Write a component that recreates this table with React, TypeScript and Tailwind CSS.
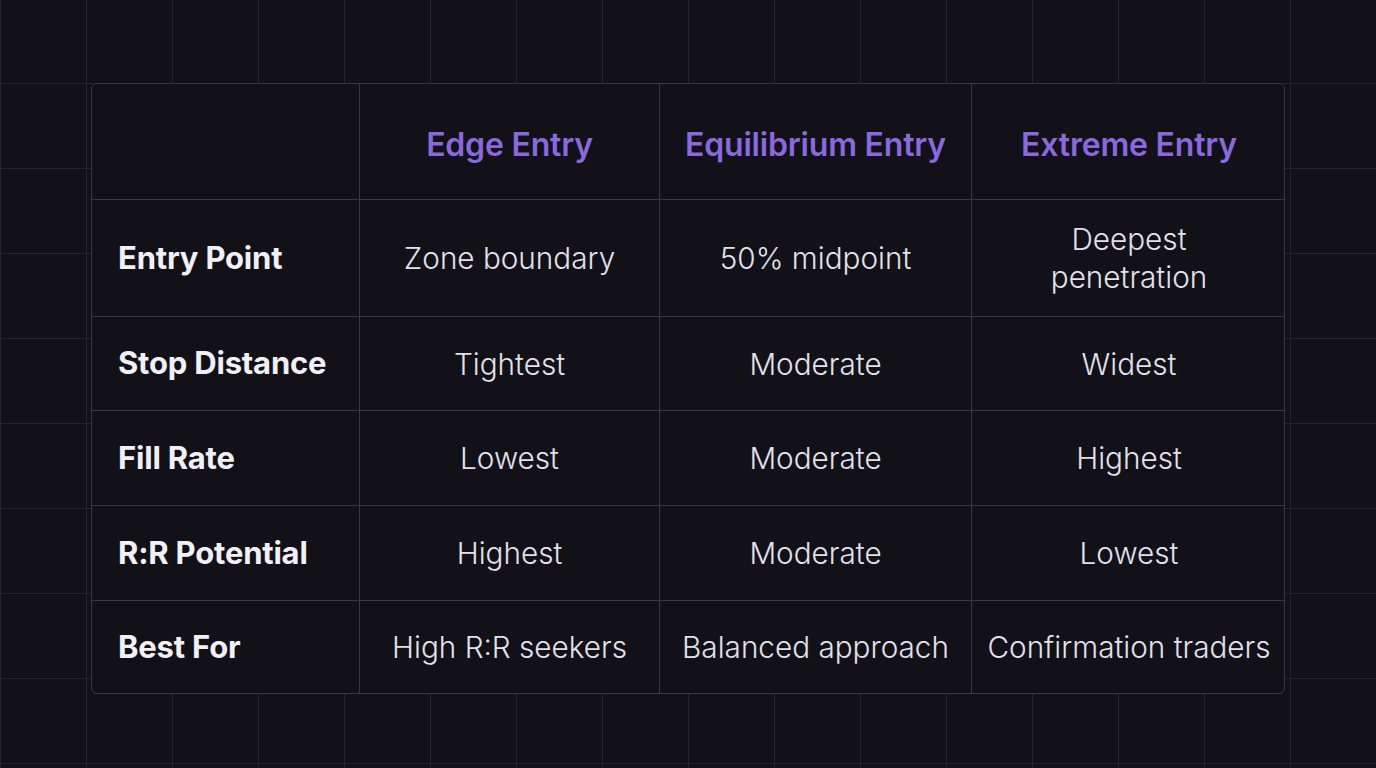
const columns = ["Edge Entry", "Equilibrium Entry", "Extreme Entry"];

const rows = [
    { label: "Entry Point", values: ["Zone boundary", "50% midpoint", "Deepest penetration"], h: "h-[117px]" },
    { label: "Stop Distance", values: ["Tightest", "Moderate", "Widest"], h: "h-[94px]" },
    { label: "Fill Rate", values: ["Lowest", "Moderate", "Highest"], h: "h-[95px]" },
    { label: "R:R Potential", values: ["Highest", "Moderate", "Lowest"], h: "h-[95px]" },
    { label: "Best For", values: ["High R:R seekers", "Balanced approach", "Confirmation traders"], h: "h-[92px]" },
];

export default function App() {
    return (
        <div
            className="h-[768px] w-[1376px] overflow-hidden bg-[#121118] bg-[linear-gradient(to_right,#25242e_1px,transparent_1px),linear-gradient(to_bottom,#25242e_1px,transparent_1px)] bg-[size:86px_85px] bg-[position:86px_83px] pt-[83px] pl-[91px]"
            style={{ fontFamily: "Inter, 'Noto Sans', sans-serif" }}
        >
            <div className="grid w-[1194px] grid-cols-[268px_300px_312px_314px] overflow-hidden rounded-md border border-[#383744] bg-[#121118]">
                {/* header row */}
                <div className="h-[116px] border-r border-b border-[#383744]" />
                {columns.map((c, i) => (
                    <div
                        key={c}
                        className={`flex h-[116px] items-center justify-center border-b border-[#383744] pt-[6px] text-[32px] font-semibold tracking-[-0.2px] text-[#8a68de] ${i < 2 ? "border-r" : ""}`}
                    >
                        {c}
                    </div>
                ))}

                {rows.map((r, ri) => {
                    const last = ri === rows.length - 1;
                    return (
                        <>
                            <div
                                key={r.label}
                                className={`flex ${r.h} items-center border-r border-[#383744] pl-[26px] text-[31px] font-bold tracking-[-0.2px] text-[#f1f0f6] ${last ? "" : "border-b"}`}
                            >
                                {r.label}
                            </div>
                            {r.values.map((v, i) => (
                                <div
                                    key={r.label + i}
                                    className={`flex ${r.h} items-center justify-center border-[#383744] px-2 text-center text-[29.7px] font-light leading-[38px] text-[#e2e1ec] ${i < 2 ? "border-r" : ""} ${last ? "" : "border-b"}`}
                                >
                                    {v === "Deepest penetration" ? (
                                        <span>
                                            Deepest
                                            <br />
                                            penetration
                                        </span>
                                    ) : (
                                        v
                                    )}
                                </div>
                            ))}
                        </>
                    );
                })}
            </div>
        </div>
    );
}
